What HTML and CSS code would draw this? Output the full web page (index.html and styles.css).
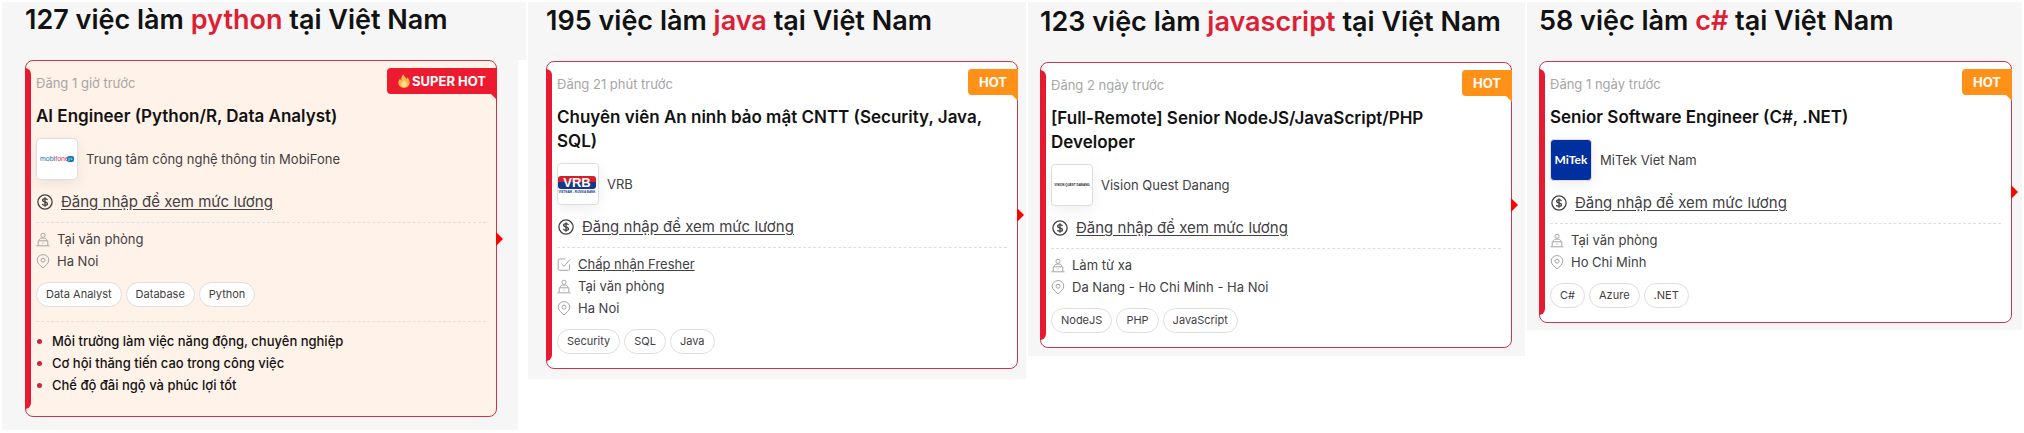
FILE: index.html
```html
<!DOCTYPE html>
<html lang="vi">
<head>
  <meta charset="UTF-8" />
  <meta name="viewport" content="width=device-width, initial-scale=1" />
  <title>Việc làm IT tại Việt Nam</title>
  <link rel="stylesheet" href="styles.css">
</head>
<body>
  <!-- shared icons -->
  <svg class="sprite" aria-hidden="true">
    <symbol id="i-salary" viewBox="0 0 16 16">
      <circle cx="8" cy="8" r="7.1" />
      <path d="M10.4 6.1C10.2 5.2 9.300 4.700 8 4.700C6.600 4.700 5.600 5.300 5.600 6.300C5.600 7.400 6.700 7.700 8 8C9.400 8.300 10.500 8.600 10.500 9.800C10.500 10.800 9.500 11.400 8 11.400C6.600 11.400 5.600 10.800 5.400 9.800M8 3.300V12.700" />
    </symbol>
    <symbol id="i-office" viewBox="0 0 14 14">
      <circle cx="7" cy="2.800" r="2.100" />
      <path d="M3.300 8V7.600C3.300 6.200 4.500 5.600 7 5.600S10.700 6.200 10.700 7.600V8M2.200 13V8.300H11.800V13M0.400 13.300H13.600M7 10V11" />
    </symbol>
    <symbol id="i-pin" viewBox="0 0 14 15">
      <path d="M7 14C4.500 11.700 1.200 9.300 1.200 6A5.800 5.400 0 0 1 12.800 6C12.800 9.300 9.500 11.700 7 14Z" />
      <circle cx="7" cy="6.200" r="2" />
    </symbol>
    <symbol id="i-check" viewBox="0 0 14 14">
      <path d="M8.500 1.500H2.200Q1.200 1.500 1.200 2.500V11.800Q1.200 12.800 2.200 12.800H11.500Q12.500 12.800 12.500 11.800V7M4.500 6.400L7 8.800L13.200 1.900" />
    </symbol>
  </svg>

  <main class="columns">
    <section class="column column-python">
      <h2 class="heading">127 việc làm <span class="keyword">python</span> tại Việt Nam</h2>
      <div class="card-area">
        <article class="card card-super">
          <span class="badge badge-super">
            <svg class="flame" viewBox="0 0 12 14"><path fill="#fdb94e" d="M5.500 0.300C6 2.500 8 3.400 8.600 5.300C9.200 4.800 9.300 4 9.200 3.300C11 5 12 7 11.600 9.400C11.200 12.200 9 13.800 6 13.800C3 13.800 0.500 12 0.400 9C0.300 7 1.200 5.600 2.200 4.500C2.300 5.400 2.600 6 3.200 6.400C3.100 4 3.700 1.800 5.500 0.300Z"/><path fill="#ffe08a" d="M6.200 6C6.300 7.600 9 8.500 8.800 10.700C8.600 12.400 7.500 13.200 6 13.200S3.200 12.300 3.200 10.700C3.200 9.700 3.700 9 4.300 8.500C4.500 9 4.800 9.200 5.200 9.300C5 8 5.300 6.900 6.200 6Z"/></svg>
            SUPER HOT
          </span>
          <p class="posted">Đăng 1 giờ trước</p>
          <h3 class="job-title">AI Engineer (Python/R, Data Analyst)</h3>
          <div class="company">
            <svg class="logo" viewBox="0 0 40 40" role="img" aria-label="mobifone">
              <text class="logo-mobifone" x="3" y="22"><tspan fill="#1c6fb0">mobi</tspan><tspan fill="#d8324a">fone</tspan></text>
              <rect x="30" y="17" width="7" height="6" rx="2" fill="#1677b8" />
              <path d="M32 19V22M34 18.500V20.500H35.500" fill="none" stroke="#8fd4ef" />
            </svg>
            <span>Trung tâm công nghệ thông tin MobiFone</span>
          </div>
          <div class="salary">
            <svg class="icon-salary"><use href="#i-salary" /></svg>
            <a href="#">Đăng nhập để xem mức lương</a>
          </div>
          <ul class="details">
            <li><svg class="icon"><use href="#i-office" /></svg>Tại văn phòng</li>
            <li><svg class="icon"><use href="#i-pin" /></svg>Ha Noi</li>
          </ul>
          <div class="tags">
            <a class="tag" href="#">Data Analyst</a>
            <a class="tag" href="#">Database</a>
            <a class="tag" href="#">Python</a>
          </div>
          <ul class="benefits">
            <li>Môi trường làm việc năng động, chuyên nghiệp</li>
            <li>Cơ hội thăng tiến cao trong công việc</li>
            <li>Chế độ đãi ngộ và phúc lợi tốt</li>
          </ul>
        </article>
      </div>
    </section>

    <section class="column column-java">
      <h2 class="heading">195 việc làm <span class="keyword">java</span> tại Việt Nam</h2>
      <div class="card-area">
        <article class="card">
          <span class="badge">HOT</span>
          <p class="posted">Đăng 21 phút trước</p>
          <h3 class="job-title">Chuyên viên An ninh bảo mật CNTT (Security, Java, SQL)</h3>
          <div class="company">
            <svg class="logo" viewBox="0 0 40 40" role="img" aria-label="VRB">
              <path d="M0 18V15Q0 12 3 12H35Q38 12 38 15V18Z" fill="#d51f2b" />
              <path d="M0 18H38V22Q38 25 35 25H3Q0 25 0 22Z" fill="#15388c" />
              <text class="logo-vrb" x="19" y="23">VRB</text>
              <text class="logo-vrb-sub" x="19" y="29">VIETNAM - RUSSIA BANK</text>
            </svg>
            <span>VRB</span>
          </div>
          <div class="salary">
            <svg class="icon-salary"><use href="#i-salary" /></svg>
            <a href="#">Đăng nhập để xem mức lương</a>
          </div>
          <ul class="details">
            <li><svg class="icon"><use href="#i-check" /></svg><a href="#">Chấp nhận Fresher</a></li>
            <li><svg class="icon"><use href="#i-office" /></svg>Tại văn phòng</li>
            <li><svg class="icon"><use href="#i-pin" /></svg>Ha Noi</li>
          </ul>
          <div class="tags">
            <a class="tag" href="#">Security</a>
            <a class="tag" href="#">SQL</a>
            <a class="tag" href="#">Java</a>
          </div>
        </article>
      </div>
    </section>

    <section class="column column-javascript">
      <h2 class="heading">123 việc làm <span class="keyword">javascript</span> tại Việt Nam</h2>
      <div class="card-area">
        <article class="card">
          <span class="badge">HOT</span>
          <p class="posted">Đăng 2 ngày trước</p>
          <h3 class="job-title">[Full-Remote] Senior NodeJS/JavaScript/PHP Developer</h3>
          <div class="company">
            <svg class="logo" viewBox="0 0 40 40" role="img" aria-label="Vision Quest Danang">
              <text class="logo-vision" x="20" y="21">VISION QUEST DANANG</text>
            </svg>
            <span>Vision Quest Danang</span>
          </div>
          <div class="salary">
            <svg class="icon-salary"><use href="#i-salary" /></svg>
            <a href="#">Đăng nhập để xem mức lương</a>
          </div>
          <ul class="details">
            <li><svg class="icon"><use href="#i-office" /></svg>Làm từ xa</li>
            <li><svg class="icon"><use href="#i-pin" /></svg>Da Nang - Ho Chi Minh - Ha Noi</li>
          </ul>
          <div class="tags">
            <a class="tag" href="#">NodeJS</a>
            <a class="tag" href="#">PHP</a>
            <a class="tag" href="#">JavaScript</a>
          </div>
        </article>
      </div>
    </section>

    <section class="column column-csharp">
      <h2 class="heading">58 việc làm <span class="keyword">c#</span> tại Việt Nam</h2>
      <div class="card-area">
        <article class="card">
          <span class="badge">HOT</span>
          <p class="posted">Đăng 1 ngày trước</p>
          <h3 class="job-title">Senior Software Engineer (C#, .NET)</h3>
          <div class="company">
            <svg class="logo logo-blue" viewBox="0 0 40 40" role="img" aria-label="MiTek">
              <text class="logo-mitek" x="20" y="24">MiTek</text>
            </svg>
            <span>MiTek Viet Nam</span>
          </div>
          <div class="salary">
            <svg class="icon-salary"><use href="#i-salary" /></svg>
            <a href="#">Đăng nhập để xem mức lương</a>
          </div>
          <ul class="details">
            <li><svg class="icon"><use href="#i-office" /></svg>Tại văn phòng</li>
            <li><svg class="icon"><use href="#i-pin" /></svg>Ho Chi Minh</li>
          </ul>
          <div class="tags">
            <a class="tag" href="#">C#</a>
            <a class="tag" href="#">Azure</a>
            <a class="tag" href="#">.NET</a>
          </div>
        </article>
      </div>
    </section>
  </main>
</body>
</html>
```
FILE: styles.css
```css
* {
  box-sizing: border-box;
}

body {
  margin: 0;
  padding: 2px 2px 0;
  background: #fff;
  color: #414042;
  font-family: Inter, "Noto Sans", sans-serif;
  font-size: 13px;
  line-height: 22px;
}

h2, h3, p, ul {
  margin: 0;
  padding: 0;
}

ul {
  list-style: none;
}

a {
  color: inherit;
}

svg {
  display: block;
  flex: none;
}

.sprite {
  display: none;
}

.columns {
  display: grid;
  grid-template-columns: 524fr 498fr 497fr 495fr;
  gap: 2px;
  align-items: start;
}

.heading {
  padding: 0 0 22px 23px;
  background: #f6f6f6;
  color: #121212;
  font-size: 27px;
  font-weight: 600;
  line-height: 36px;
  white-space: nowrap;
}

.keyword {
  color: #dd1f35;
}

.card-area {
  background: #f6f6f6;
}

.column-python .card-area {
  margin-right: 8px;
  padding: 0 21px 13px 23px;
}

.column-java .heading {
  padding-top: 1px;
  padding-left: 18px;
}

.column-java .card-area {
  padding: 0 8px 10px 18px;
}

.column-javascript .heading {
  padding-top: 2px;
  padding-left: 12px;
}

.column-javascript .card-area {
  padding: 0 13px 8px 12px;
}

.column-csharp .heading {
  padding-top: 1px;
  padding-left: 12px;
}

.column-csharp .card-area {
  padding: 0 10px 7px 12px;
}

.card {
  position: relative;
  padding: 12px 10px 14px;
  border: 1px solid #c8384b;
  border-radius: 8px;
  background: #fff;
}

.card-super {
  padding-bottom: 20px;
  background: #fff2e8;
}

/* red bar on the left edge */
.card::before {
  content: "";
  position: absolute;
  top: 7px;
  bottom: 7px;
  left: -1px;
  width: 6px;
  border-radius: 0 6px 6px 0;
  background: #e61a30;
}

/* arrow pointing out of the right edge */
.card::after {
  content: "";
  position: absolute;
  top: 50%;
  left: 100%;
  margin-top: -7px;
  border: 7px solid transparent;
  border-left-color: #f00;
  border-right: 0;
}

.badge {
  position: absolute;
  top: 7px;
  right: -1px;
  display: flex;
  align-items: center;
  gap: 2px;
  height: 26px;
  padding: 0 11px;
  border-radius: 4px 0 0 4px;
  background: #ff9119;
  color: #fff;
  font-size: 13px;
  font-weight: 700;
}

.badge::after {
  content: "";
  position: absolute;
  top: 100%;
  right: 0;
  border-top: 6px solid #ff9119;
  border-left: 6px solid transparent;
}

.badge-super {
  background: #ed1b2f;
}

.badge-super::after {
  border-top-color: #ed1b2f;
}

.flame {
  width: 12px;
  height: 14px;
}

.posted {
  color: #a6a6a6;
  line-height: 20px;
}

.job-title {
  margin-top: 11px;
  color: #121212;
  font-size: 17px;
  font-weight: 600;
  line-height: 24px;
}

.company {
  display: flex;
  align-items: center;
  gap: 8px;
  margin-top: 10px;
}

.logo {
  width: 42px;
  height: 42px;
  border: 1px solid #dedede;
  border-radius: 4px;
  background: #fff;
  box-shadow: 0 4px 14px rgba(0, 0, 0, 0.07);
}

.logo-blue {
  background: #00309f;
}

.logo text {
  font-family: "Liberation Sans", sans-serif;
}

.logo .logo-mobifone {
  font-size: 7px;
}

.logo .logo-vrb {
  fill: #fff;
  font-size: 13px;
  font-weight: 700;
  text-anchor: middle;
}

.logo .logo-vrb-sub {
  fill: #15388c;
  font-size: 3px;
  font-weight: 700;
  text-anchor: middle;
}

.logo .logo-vision {
  fill: #222;
  font-size: 3px;
  font-weight: 700;
  text-anchor: middle;
}

.logo .logo-mitek {
  fill: #fff;
  font-family: Lato, sans-serif;
  font-size: 12px;
  font-weight: 700;
  text-anchor: middle;
}

.salary {
  display: flex;
  align-items: center;
  gap: 8px;
  margin-top: 10px;
  padding-left: 1px;
  font-size: 15px;
  line-height: 24px;
}

.salary a {
  text-underline-offset: 2px;
}

.icon-salary {
  width: 16px;
  height: 16px;
  fill: none;
  stroke: #414042;
  stroke-width: 1.3;
}

.details {
  margin-top: 8px;
  padding-top: 5px;
  border-top: 1px dashed #dedede;
}

.details li {
  display: flex;
  align-items: center;
  gap: 7px;
}

.icon {
  width: 14px;
  height: 15px;
  fill: none;
  stroke: #a6a6a6;
}

.tags {
  display: flex;
  flex-wrap: wrap;
  gap: 4px;
  margin-top: 10px;
}

.tag {
  height: 25px;
  padding: 0 9px;
  border: 1px solid #dedede;
  border-radius: 13px;
  background: #fff;
  font-size: 11px;
  line-height: 23px;
  text-decoration: none;
}

.benefits {
  margin-top: 14px;
  padding-top: 8px;
  border-top: 1px dashed #ecdcd2;
  color: #121212;
  font-weight: 500;
}

.benefits li {
  display: flex;
  align-items: center;
  gap: 10px;
}

.benefits li::before {
  content: "";
  width: 5px;
  height: 5px;
  margin-left: 1px;
  border-radius: 50%;
  background: #c8253a;
}
```
